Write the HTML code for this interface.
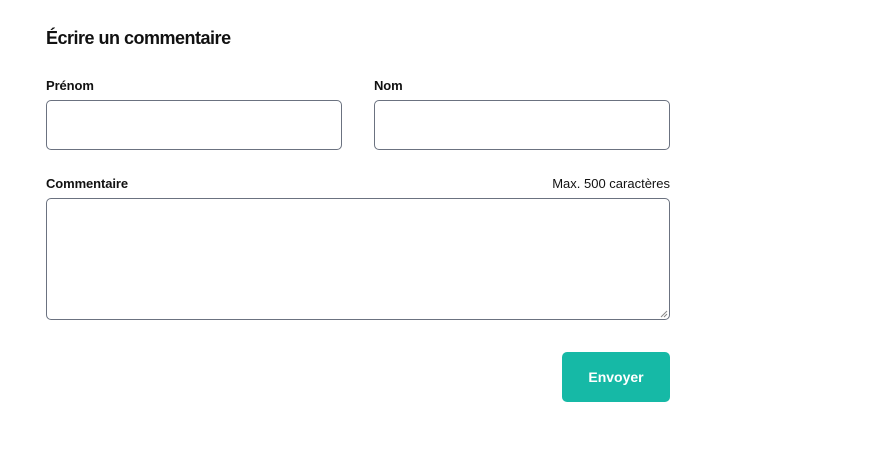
<!DOCTYPE html>
<html><head><style>
*{box-sizing:border-box;margin:0;padding:0}
body{width:880px;height:468px;background:#fff;font-family:"Liberation Sans",sans-serif;color:#111;position:relative;overflow:hidden}
.a{position:absolute}
h2{position:absolute;left:46px;top:28px;font-size:18px;font-weight:600;letter-spacing:-0.5px}
.l{font-size:13px;font-weight:bold;letter-spacing:-0.1px}
.box{border:1px solid #6b7280;border-radius:5px;background:#fff}
.btn{background:#16b9a6;border-radius:5px;color:#fff;font-weight:bold;font-size:14px;display:flex;align-items:center;justify-content:center}
</style></head><body>
<h2>Écrire un commentaire</h2>
<div class="a l" style="left:46px;top:78px">Prénom</div>
<div class="a l" style="left:374px;top:78px">Nom</div>
<div class="a box" style="left:46px;top:100px;width:296px;height:50px"></div>
<div class="a box" style="left:374px;top:100px;width:296px;height:50px"></div>
<div class="a l" style="left:46px;top:176px">Commentaire</div>
<div class="a" style="right:210px;top:176px;font-size:13px;letter-spacing:0px">Max. 500 caractères</div>
<div class="a box" style="left:46px;top:198px;width:624px;height:122px">
<svg class="a" style="right:1px;bottom:1px" width="8" height="8"><path d="M7 1L1 7M7 4L4 7" stroke="#888" stroke-width="1"/></svg></div>
<div class="a btn" style="left:562px;top:352px;width:108px;height:50px">Envoyer</div>
</body></html>
